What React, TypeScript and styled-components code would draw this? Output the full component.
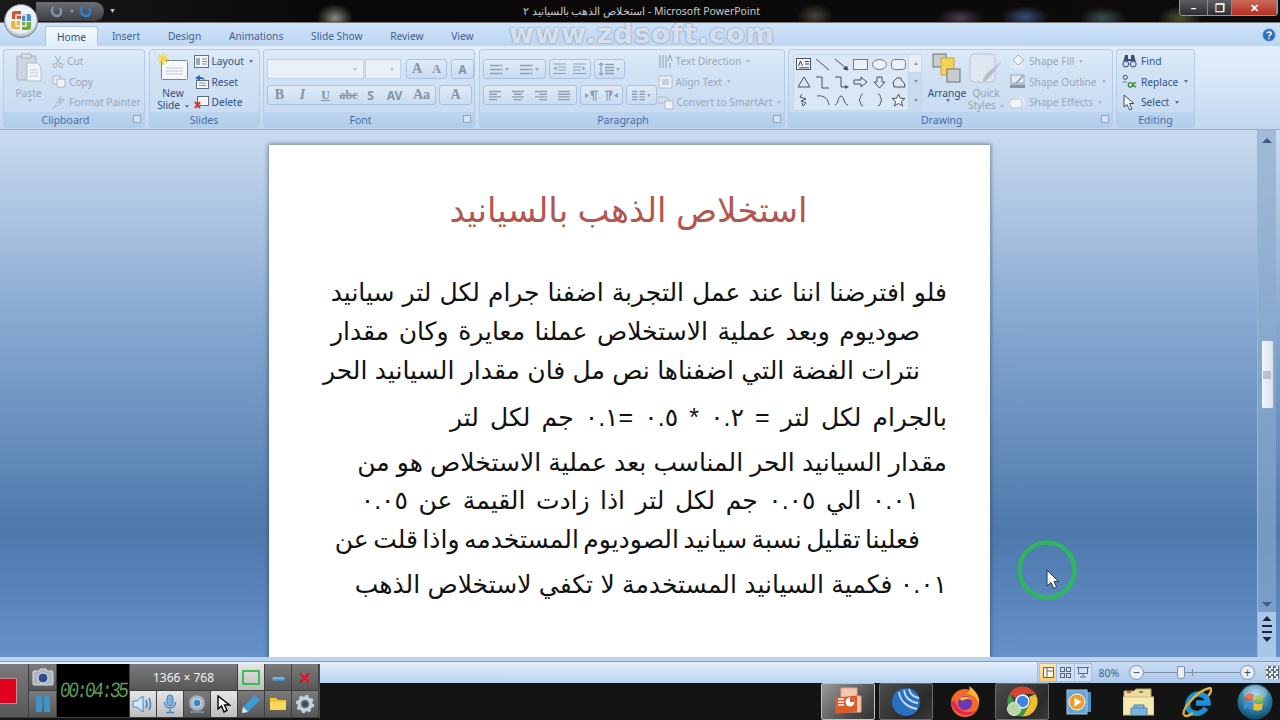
import React from "react"
import styled, { createGlobalStyle } from "styled-components"

const GlobalStyle = createGlobalStyle`
	html, body {
		margin: 0;
		padding: 0;
		background: #141414;
		font-family: "Noto Sans", "Liberation Sans", sans-serif;
	}
`

const Page = styled.div`
	position: relative;
	width: 1280px;
	height: 720px;
	overflow: hidden;
	display: flex;
	flex-direction: column;
`

/* title bar */
const TitleBar = styled.div`
	height: 23px;
	flex-shrink: 0;
	display: flex;
	align-items: flex-start;
	box-sizing: border-box;
	border-bottom: 1px solid #77797c;
	background:
		radial-gradient(ellipse 18px 14px at 335px 18px, #8f8b80 0%, rgba(100, 96, 88, 0.6) 55%, transparent 100%),
		radial-gradient(ellipse 18px 12px at 815px 16px, #4a4438 0%, transparent 100%),
		radial-gradient(ellipse 24px 10px at 960px 18px, #4b3a50 0%, transparent 100%),
		radial-gradient(ellipse 24px 11px at 1025px 17px, #3a4c78 0%, transparent 100%),
		radial-gradient(ellipse 24px 11px at 1103px 18px, #3a4d55 0%, transparent 100%),
		radial-gradient(ellipse 22px 12px at 1180px 18px, #4d5030 0%, transparent 100%),
		linear-gradient(90deg, #1a1a1a 0%, #0a0808 25%, #0d0b0a 100%);
`

const QuickAccess = styled.div`
	margin: 2px 0 0 36px;
	width: 68px;
	height: 19px;
	display: flex;
	align-items: center;
	gap: 5px;
	padding-left: 14px;
	box-sizing: border-box;
	color: #a8b4c4;
	border-radius: 0 10px 10px 0;
	background: linear-gradient(180deg, #6b6e72, #3c3e42);
`

const QuickMenu = styled.div`
	margin: 7px 0 0 5px;
	color: #c4c7cc;
	font-size: 7px;
	line-height: 8px;
`

const TitleText = styled.div`
	flex: 1;
	text-align: center;
	padding: 4px 12px 0 0;
	font-size: 10.5px;
	line-height: 15px;
	color: #c9c9c9;
	white-space: nowrap;
`

const WindowButtons = styled.div`
	display: flex;
	height: 15px;
	margin-right: 2px;
	border: 1px solid #9a9a9a;
	border-top: none;
	border-radius: 0 0 4px 4px;
	overflow: hidden;
`

const WindowButton = styled.div<{ $w: number; $close?: boolean }>`
	width: ${(p) => p.$w}px;
	display: flex;
	align-items: center;
	justify-content: center;
	color: #fff;
	font-size: 11px;
	font-weight: 700;
	border-right: 1px solid #888;
	background: ${(p) =>
		p.$close ? "linear-gradient(180deg, #c96a5a, #b52e20)" : "linear-gradient(180deg, #5c5f62, #2c2e31)"};
`

/* ribbon */
const TabRow = styled.div`
	height: 23px;
	flex-shrink: 0;
	display: flex;
	align-items: flex-end;
	padding-left: 45px;
	padding-right: 4px;
	background: linear-gradient(180deg, #cfe2f8, #bed6f2);
`

const Tab = styled.div<{ $active?: boolean }>`
	height: 20px;
	box-sizing: border-box;
	padding: ${(p) => (p.$active ? "0 11px 0 11px" : "0 13.9px")};
	display: flex;
	align-items: center;
	font-size: 10.2px;
	color: ${(p) => (p.$active ? "#2d4a78" : "#3f5f90")};
	border-radius: 3px 3px 0 0;
	white-space: nowrap;
	${(p) =>
		p.$active &&
		`background: linear-gradient(180deg, #f4f9fe, #dfeefb);
		border: 1px solid #aac6e6;
		border-bottom: none;`}
`

const HelpDot = styled.div`
	margin-left: auto;
	margin-bottom: 4px;
	display: flex;
`

const Ribbon = styled.div`
	height: 84px;
	flex-shrink: 0;
	display: flex;
	gap: 3.5px;
	padding: 3px 5px 1px 3px;
	box-sizing: border-box;
	border-bottom: 1px solid #8fb0d8;
	background: linear-gradient(180deg, #e3eefa 0%, #d6e5f6 45%, #c3d8f0 100%);
`

const Group = styled.div<{ $w: number }>`
	width: ${(p) => p.$w}px;
	flex-shrink: 0;
	box-sizing: border-box;
	display: flex;
	flex-direction: column;
	border: 1px solid #b4cce8;
	border-radius: 3px;
	overflow: hidden;
	background: linear-gradient(180deg, #dce9f7 0%, #d2e2f4 30%, #c6daf0 100%);
`

const GroupBody = styled.div`
	flex: 1;
	display: flex;
	padding: 1px 2px 0 3px;
	min-height: 0;
`

const GroupLabel = styled.div<{ $launch?: boolean }>`
	height: 15px;
	flex-shrink: 0;
	position: relative;
	display: flex;
	align-items: center;
	justify-content: center;
	box-sizing: border-box;
	padding-top: 1px;
	padding-right: ${(p) => (p.$launch ? "17px" : "0")};
	font-size: 10.5px;
	color: #4a6ea6;
	background: linear-gradient(180deg, #bcd4ee, #b2cdea);
`

const Launcher = styled.div`
	position: absolute;
	right: 3px;
	top: 3px;
	width: 6px;
	height: 6px;
	border: 1px solid #8fa8c8;
	background: #d5e3f3;
`

const BigButton = styled.div<{ $w: number; $dim?: boolean }>`
	width: ${(p) => p.$w}px;
	flex-shrink: 0;
	display: flex;
	flex-direction: column;
	align-items: center;
	font-size: 10.2px;
	line-height: 12px;
	text-align: center;
	color: ${(p) => (p.$dim ? "#96a6b9" : "#2f4f82")};
`

const BigIcon = styled.div`
	height: 36px;
	display: flex;
	align-items: flex-start;
	justify-content: center;
	padding-top: 2px;
	box-sizing: border-box;
`

const SmallCol = styled.div<{ $left?: number }>`
	display: flex;
	flex-direction: column;
	margin-left: ${(p) => p.$left ?? 0}px;
`

const SmallRow = styled.div<{ $dim?: boolean; $gap?: number }>`
	height: 20.5px;
	flex-shrink: 0;
	display: flex;
	align-items: center;
	gap: ${(p) => p.$gap ?? 3}px;
	font-size: 10.2px;
	white-space: nowrap;
	color: ${(p) => (p.$dim ? "#98a8bb" : "#2f4f82")};
`

const Caret = styled.span<{ $up?: boolean }>`
	display: inline-block;
	width: 0;
	height: 0;
	margin-left: 2px;
	vertical-align: middle;
	border: 2.5px solid transparent;
	border-top: 3px solid currentColor;
	border-bottom: none;
	opacity: 0.75;
	${(p) => (p.$up ? "transform: rotate(180deg);" : "")}
`

const ToolRows = styled.div`
	display: flex;
	flex-direction: column;
	gap: 6px;
	padding-top: 8px;
`

const ToolRow = styled.div<{ $gap?: number }>`
	display: flex;
	gap: ${(p) => p.$gap ?? 3}px;
	height: 20px;
`

const Combo = styled.div<{ $w: number }>`
	width: ${(p) => p.$w}px;
	box-sizing: border-box;
	display: flex;
	align-items: center;
	justify-content: flex-end;
	padding-right: 6px;
	color: #a8b4c2;
	border: 1px solid #bfd2e8;
	background: #e9f0f8;
`

const ToolGroup = styled.div<{ $left?: number }>`
	display: flex;
	margin-left: ${(p) => p.$left ?? 0}px;
	border: 1px solid #a9c2df;
	border-radius: 3px;
	background: linear-gradient(180deg, #e0ebf8, #c9dcf1);
`

const Tool = styled.div<{ $w: number; $serif?: boolean; $big?: boolean }>`
	width: ${(p) => p.$w}px;
	display: flex;
	align-items: center;
	justify-content: center;
	font-size: ${(p) => (p.$big ? 14 : 12)}px;
	font-weight: 700;
	color: #8393a6;
	font-family: ${(p) => (p.$serif ? '"Liberation Serif", serif' : "inherit")};
`

const Gallery = styled.div`
	width: 127px;
	height: 55px;
	margin: 3px 5px 0 1px;
	flex-shrink: 0;
	display: flex;
	border: 1px solid #c4d6ea;
	background: #dbe7f5;
`

const ShapeGrid = styled.div`
	flex: 1;
	display: grid;
	grid-template-columns: repeat(6, 19px);
	grid-template-rows: repeat(3, 18px);
	align-items: center;
	justify-items: center;
`

const GalleryScroll = styled.div`
	width: 12px;
	display: flex;
	flex-direction: column;
	border-left: 1px solid #c4d6ea;
`

const GalleryStep = styled.div<{ $top?: boolean }>`
	flex: 1;
	display: flex;
	align-items: center;
	justify-content: center;
	color: #667c98;
	background: ${(p) => (p.$top ? "#e8eef4" : "#c9daee")};
	border-bottom: 1px solid #c4d6ea;
`

/* document area */
const Workspace = styled.div`
	flex: 1;
	min-height: 0;
	display: flex;
	background: linear-gradient(180deg, #c9dbef 0%, #84a6cf 38%, #4e79ad 76%, #6590c9 100%);
`

const Canvas = styled.div`
	flex: 1;
	min-width: 0;
	padding: 15px 0 0 269px;
	overflow: hidden;
`

const Slide = styled.div`
	width: 721px;
	height: 100%;
	box-sizing: border-box;
	background: #fff;
	box-shadow: 0 0 4px 1px rgba(40, 60, 90, 0.55);
	padding-top: 43px;
	font-family: "Liberation Sans", "DejaVu Sans", sans-serif;
	color: #000;
`

const SlideTitle = styled.div`
	direction: rtl;
	text-align: center;
	font-size: 34px;
	line-height: 44px;
	color: #b45650;
	padding-right: 2px;
	white-space: nowrap;
`

const SlideBody = styled.div`
	margin-top: 45px;
`

const BodyLine = styled.div<{ $inset: number; $gap: number; $spread: number }>`
	direction: rtl;
	white-space: nowrap;
	font-size: 25px;
	line-height: 30px;
	color: #111;
	padding-right: ${(p) => p.$inset}px;
	margin-top: ${(p) => p.$gap}px;
	word-spacing: ${(p) => p.$spread}px;
`

const ScrollBar = styled.div`
	width: 18px;
	margin-right: 4px;
	display: flex;
	flex-direction: column;
	align-items: center;
	flex-shrink: 0;
	background: rgba(140, 170, 205, 0.65);
	border-left: 1px solid #9ab6d8;
`

const ScrollArrow = styled.div<{ $down?: boolean }>`
	width: 0;
	height: 0;
	margin-top: ${(p) => (p.$down ? "auto" : "8px")};
	margin-bottom: ${(p) => (p.$down ? "5px" : "0")};
	border-left: 5px solid transparent;
	border-right: 5px solid transparent;
	${(p) => (p.$down ? "border-top: 5px solid #3f5c86;" : "border-bottom: 5px solid #3f5c86;")}
`

const ScrollThumb = styled.div`
	width: 13px;
	height: 69px;
	margin-top: 197px;
	box-sizing: border-box;
	display: flex;
	align-items: center;
	justify-content: center;
	border: 1px solid #8ea7c6;
	border-radius: 2px;
	background: linear-gradient(90deg, #f3f6fa, #d9e2ee);
	color: #7e8794;
`

const PageStepper = styled.div`
	width: 100%;
	height: 45px;
	display: flex;
	flex-direction: column;
	align-items: center;
	gap: 4px;
	padding-top: 4px;
	box-sizing: border-box;
	background: #a9c5ea;
`

const EdgeStrip = styled.div`
	height: 4px;
	flex-shrink: 0;
	background: #bcd3ee;
	border-bottom: 1px solid #7f9fca;
`

const StatusBar = styled.div`
	height: 21px;
	flex-shrink: 0;
	display: flex;
	justify-content: flex-end;
	background: linear-gradient(180deg, #e4effb 0%, #cfe1f6 50%, #b9d3f1 100%);
`

const StatusRight = styled.div`
	width: 243px;
	display: flex;
	align-items: center;
	padding-left: 1px;
	box-sizing: border-box;
	background: linear-gradient(180deg, #c9dcf3, #abc8ea);
	border-left: 1px solid #a5bfde;
`

const ViewButton = styled.div<{ $active?: boolean }>`
	width: 16.5px;
	height: 17px;
	display: flex;
	align-items: center;
	justify-content: center;
	border: 1px solid #a5bfde;
	margin-right: -1px;
	background: ${(p) => (p.$active ? "linear-gradient(180deg, #fbe6ae, #f6cf75)" : "#cfe0f4")};
`

const ZoomText = styled.div`
	width: 35px;
	text-align: center;
	font-size: 10.5px;
	color: #3f5f90;
`

const ZoomTrack = styled.div`
	position: relative;
	width: 96px;
	height: 1px;
	background: #7d8fa8;
`

const ZoomTick = styled.div`
	position: absolute;
	left: 48px;
	top: -3px;
	width: 1px;
	height: 7px;
	background: #7d8fa8;
`

const ZoomThumb = styled.div`
	position: absolute;
	left: 33px;
	top: -6px;
	width: 6px;
	height: 11px;
	border: 1px solid #7d8fa8;
	border-radius: 1px 1px 3px 3px;
	background: #e8eef6;
`

const ZoomRound = styled.div<{ $left?: number }>`
	width: 13px;
	height: 13px;
	margin-left: ${(p) => p.$left ?? 0}px;
	display: flex;
	align-items: center;
	justify-content: center;
	flex-shrink: 0;
	border: 1px solid #7d8fa8;
	border-radius: 50%;
	background: #e7eef8;
	color: #3d4f68;
	font-size: 12px;
	line-height: 12px;
`

const FitButton = styled.div`
	width: 13px;
	height: 13px;
	margin-left: 10px;
	background: repeating-conic-gradient(#5b6a7c 0 25%, #eef3f9 0 50%) 0 0 / 5px 5px;
	border: 1px solid #b0c4dc;
`

const Taskbar = styled.div`
	height: 37px;
	flex-shrink: 0;
	display: flex;
	align-items: stretch;
	padding-left: 821px;
	background: #141414;
`

const TaskItem = styled.div<{ $w: number; $gap: number; $kind?: "on" | "open" }>`
	width: ${(p) => p.$w}px;
	margin-right: ${(p) => p.$gap}px;
	flex-shrink: 0;
	box-sizing: border-box;
	display: flex;
	align-items: center;
	justify-content: center;
	border-radius: 2px;
	${(p) =>
		p.$kind === "on"
			? "background: linear-gradient(135deg, #9a9a9a, #4a4a4a 70%, #333); border: 1px solid #c4c4c4;"
			: p.$kind === "open"
				? "background: linear-gradient(135deg, #4c4c4c, #2a2a2a 70%, #3a3a3a); border: 1px solid #6c6c6c;"
				: ""}
`

/* things lying over the window */
const OfficeOrb = styled.div`
	position: absolute;
	left: 4px;
	top: 4px;
	display: flex;
`

const Watermark = styled.div`
	position: absolute;
	left: 509px;
	top: 19px;
	font-family: "DejaVu Sans", sans-serif;
	font-size: 27px;
	line-height: 30px;
	font-weight: 700;
	letter-spacing: 1.1px;
	color: rgba(248, 251, 255, 0.8);
	text-shadow: 0 0 2px rgba(80, 110, 155, 0.95);
	white-space: nowrap;
`

const PointerMark = styled.div`
	position: absolute;
	left: 1017px;
	top: 540px;
	display: flex;
`

const Recorder = styled.div`
	position: absolute;
	left: 0;
	top: 664px;
	width: 320px;
	height: 54px;
	display: grid;
	grid-template-columns: 29px 28px 73px repeat(7, 27px);
	grid-template-rows: 27px 27px;
	gap: 0;
	background: #4f4f4f;
`

const RecCell = styled.div<{ $col?: number; $row?: number; $light?: boolean; $dark?: boolean }>`
	grid-column: span ${(p) => p.$col ?? 1};
	grid-row: span ${(p) => p.$row ?? 1};
	display: flex;
	align-items: center;
	justify-content: center;
	box-sizing: border-box;
	border-right: 1px solid #3f3f3f;
	border-bottom: 1px solid #3f3f3f;
	background: ${(p) =>
		p.$dark
			? "#000"
			: p.$light
				? "linear-gradient(180deg, #e6e6e6, #bdbdbd)"
				: "linear-gradient(180deg, #7b7b7b, #575757)"};
`

const RecSquare = styled.div`
	width: 18px;
	height: 24px;
	margin-right: 11px;
	background: #e2001f;
	border: 1px solid #c98b90;
	border-left: none;
`

const Timer = styled.div`
	font-family: "Liberation Mono", monospace;
	font-size: 18px;
	letter-spacing: -2.5px;
	color: #5a9a5a;
	transform: skewX(-6deg) scaleY(1.2);
	white-space: nowrap;
`

const SizeText = styled.div`
	font-size: 12px;
	color: #f2f2f2;
`

const GreenBox = styled.div`
	width: 14px;
	height: 11px;
	border: 2px solid #3dbb52;
`

const DashMark = styled.div`
	width: 13px;
	height: 4px;
	margin-top: 3px;
	border-radius: 2px;
	background: linear-gradient(180deg, #8fc0ea, #3f86c6);
`

const CloseMark = styled.div`
	color: #e0142c;
	font-size: 17px;
	line-height: 17px;
	font-weight: 700;
`

const OfficeLogo = () => (
	<svg width="34" height="34" viewBox="0 0 34 34">
		<defs>
			<radialGradient id="orb" cx="50%" cy="40%" r="60%">
				<stop offset="0" stopColor="#fff" />
				<stop offset="0.75" stopColor="#e9eef3" />
				<stop offset="1" stopColor="#9aa5b0" />
			</radialGradient>
		</defs>
		<circle cx="17" cy="17" r="16.5" fill="url(#orb)" stroke="#7b848e" />
		<path d="M8 9 Q8 7 11 7 H17 V15 H8 Z" fill="#d2552c" />
		<path d="M18 10 H25 Q27 10 27 13 V17 H18 Z" fill="#4a8fd0" />
		<path d="M7 17 H16 V25 H11 Q7 25 7 22 Z" fill="#eeb338" />
		<path d="M18 18 H27 V23 Q27 26 24 26 H18 Z" fill="#6fae3c" />
		<path d="M12 11 H22 V22 H12 Z" fill="none" stroke="#f4f4f4" strokeWidth="1.4" />
	</svg>
)

const PasteIcon = () => (
	<svg width="26" height="30" viewBox="0 0 26 30">
		<rect x="1" y="3" width="19" height="24" rx="1" fill="#cbd6e2" stroke="#a6b1be" />
		<rect x="6" y="1" width="9" height="4" fill="#dfe4ea" stroke="#a6b1be" />
		<path d="M11 10 H21 L25 14 V28 H11 Z" fill="#f1f4f8" stroke="#b3bcc7" />
		<path d="M14 17 H22 M14 20 H22 M14 23 H22" stroke="#c2c9d2" />
	</svg>
)

const CutIcon = () => (
	<svg width="12" height="13" viewBox="0 0 12 13" fill="none" stroke="#a2adba">
		<path d="M3 1 L8 9 M9 1 L4 9" />
		<circle cx="3" cy="10.5" r="2" />
		<circle cx="9" cy="10.5" r="2" />
	</svg>
)

const CopyIcon = () => (
	<svg width="14" height="13" viewBox="0 0 14 13">
		<rect x="1" y="1" width="7" height="8" fill="#e6ecf3" stroke="#b0bac6" />
		<rect x="5" y="4" width="8" height="8" fill="#eff3f8" stroke="#b0bac6" />
	</svg>
)

const BrushIcon = () => (
	<svg width="14" height="14" viewBox="0 0 14 14">
		<path d="M8 1 L13 5 L8 9 L5 6 Z" fill="#bac4d0" />
		<path d="M6 7 L1 13 L8 9 Z" fill="#e8edf3" stroke="#aeb8c4" />
	</svg>
)

const NewSlideIcon = () => (
	<svg width="32" height="28" viewBox="0 0 32 28">
		<rect x="4.5" y="7.5" width="26" height="19" rx="1" fill="#f4f7fb" stroke="#7b8796" />
		<path d="M9 15 H26 M9 18 H26 M9 21 H26" stroke="#c3cad4" />
		<g stroke="#f3d83a" strokeWidth="1.6">
			<path d="M6 0 V12 M0 6 H12 M2 2 L10 10 M10 2 L2 10" />
		</g>
	</svg>
)

const LayoutIcon = () => (
	<svg width="15" height="13" viewBox="0 0 15 13">
		<rect x="0.5" y="0.5" width="14" height="12" fill="#f4f6fa" stroke="#5f6e83" />
		<rect x="2" y="3" width="4" height="7" fill="#9aa9bc" />
		<path d="M8 4 H13 M8 6.5 H13 M8 9 H13" stroke="#7d8ba0" />
	</svg>
)

const ResetIcon = () => (
	<svg width="15" height="14" viewBox="0 0 15 14">
		<rect x="2.5" y="5.5" width="12" height="8" fill="#f4f6fa" stroke="#5f6e83" />
		<path d="M5 8 H12 M5 10.5 H12" stroke="#8494a8" />
		<path d="M1 3 L6 0 V2 C9 2 10 3 11 5 C9 4 8 4 6 4 V6 Z" fill="#2e66b4" />
	</svg>
)

const DeleteIcon = () => (
	<svg width="15" height="13" viewBox="0 0 15 13">
		<rect x="3.5" y="0.5" width="11" height="9" fill="#f4f6fa" stroke="#5f6e83" />
		<path d="M1 6 L6 12 M6 6 L1 12" stroke="#d8352a" strokeWidth="2" />
	</svg>
)

const lineColor = "#8fa0b5"

const BulletIcon = () => (
	<svg width="13" height="11" viewBox="0 0 13 11" stroke={lineColor} strokeWidth="1.4">
		<path d="M0 1.5 H10 M0 5.5 H10 M0 9.5 H10" />
		<path d="M11.5 0.5 V2.5 M11.5 4.5 V6.5 M11.5 8.5 V10.5" strokeWidth="1.6" />
	</svg>
)

const IndentIcon = ({ flip }: { flip?: boolean }) => (
	<svg width="13" height="12" viewBox="0 0 13 12" stroke={lineColor} strokeWidth="1.2" transform={flip ? "scale(-1 1)" : undefined}>
		<path d="M0 1 H13 M5 4 H13 M5 7 H13 M0 10.5 H13" />
		<path d="M3.5 3.5 L0.5 5.5 L3.5 7.5 Z" fill={lineColor} stroke="none" />
	</svg>
)

const SpacingIcon = () => (
	<svg width="16" height="14" viewBox="0 0 16 14" stroke={lineColor} strokeWidth="1.2" fill="none">
		<path d="M3 1 V13 M1 3 L3 1 L5 3 M1 11 L3 13 L5 11" />
		<path d="M7 2.5 H16 M7 5.5 H16 M7 8.5 H16 M7 11.5 H16" strokeWidth="1.4" />
	</svg>
)

const AlignIcon = ({ kind }: { kind: "left" | "center" | "right" | "full" }) => {
	const short = {
		left: "M0 4.2 H8 M0 9.6 H8",
		center: "M2 4.2 H10 M2 9.6 H10",
		right: "M4 4.2 H12 M4 9.6 H12",
		full: "M0 4.2 H12 M0 9.6 H12",
	}[kind]
	return (
		<svg width="12" height="11" viewBox="0 0 12 11" stroke={lineColor} strokeWidth="1.4">
			<path d={`M0 1.5 H12 M0 6.9 H12 ${short}`} />
		</svg>
	)
}

const ParaMarkIcon = ({ flip }: { flip?: boolean }) => (
	<svg width="13" height="11" viewBox="0 0 13 11" fill={lineColor} transform={flip ? "scale(-1 1)" : undefined}>
		<path d="M0 3 L4 5.5 L0 8 Z" />
		<path d="M6 0.5 H13 V2 H11.5 V10.5 H10.3 V2 H9 V10.5 H7.8 V6 C5 6 5 0.5 6 0.5 Z" />
	</svg>
)

const ColumnsIcon = () => (
	<svg width="13" height="11" viewBox="0 0 13 11" stroke={lineColor} strokeWidth="1.4">
		<path d="M0 1.5 H5.5 M0 4.2 H5.5 M0 6.9 H5.5 M0 9.6 H5.5 M7.5 1.5 H13 M7.5 4.2 H13 M7.5 6.9 H13 M7.5 9.6 H13" />
	</svg>
)

const GripIcon = () => (
	<svg width="8" height="8" viewBox="0 0 8 8" stroke="#8a93a0">
		<path d="M0 1 H8 M0 3 H8 M0 5 H8 M0 7 H8" />
	</svg>
)

const NormalViewIcon = () => (
	<svg width="11" height="11" viewBox="0 0 11 11" fill="#fdf6df" stroke="#55667c">
		<rect x="0.5" y="0.5" width="10" height="10" />
		<path d="M4 0.5 V10.5 M4 4 H10.5" fill="none" />
	</svg>
)

const SorterViewIcon = () => (
	<svg width="11" height="11" viewBox="0 0 11 11" fill="none" stroke="#55667c">
		<rect x="0.5" y="0.5" width="4" height="4" />
		<rect x="6.5" y="0.5" width="4" height="4" />
		<rect x="0.5" y="6.5" width="4" height="4" />
		<rect x="6.5" y="6.5" width="4" height="4" />
	</svg>
)

const ShowViewIcon = () => (
	<svg width="12" height="11" viewBox="0 0 12 11" fill="none" stroke="#55667c">
		<rect x="1.5" y="0.5" width="9" height="6" />
		<path d="M0 0.5 H12 M6 6.5 V9 M3 10 H9" />
	</svg>
)

const TextDirIcon = () => (
	<svg width="15" height="15" viewBox="0 0 15 15" fill="none" stroke="#8d9cae">
		<path d="M2 1 V14 M5 1 V14 M8 1 V14" />
		<path d="M10 7 L12 1 L14 7 M12 9 V14" />
	</svg>
)

const AlignTextIcon = () => (
	<svg width="15" height="15" viewBox="0 0 15 15">
		<rect x="1" y="2" width="13" height="12" fill="#e8eef5" stroke="#b4bfcc" />
		<path d="M4 6 H11 M4 8 H11 M4 10 H11" stroke="#a2aebc" />
	</svg>
)

const SmartArtIcon = () => (
	<svg width="16" height="15" viewBox="0 0 16 15">
		<path d="M0 2 H8 L11 5 L8 8 H0 Z" fill="#d5dde7" stroke="#b0bac6" />
		<rect x="7" y="6" width="8" height="8" fill="#eef2f7" stroke="#b0bac6" />
	</svg>
)

const ArrangeIcon = () => (
	<svg width="30" height="30" viewBox="0 0 30 30">
		<rect x="1" y="1" width="13" height="13" fill="#c9ccd0" stroke="#6d6f72" />
		<rect x="9" y="5" width="13" height="17" fill="#f1d35a" stroke="#c9a83a" />
		<rect x="15" y="16" width="13" height="13" fill="#c9ccd0" stroke="#6d6f72" />
	</svg>
)

const QuickStylesIcon = () => (
	<svg width="34" height="31" viewBox="0 0 34 31">
		<rect x="1" y="1" width="25" height="28" rx="4" fill="#dfe7f1" stroke="#b8c4d2" />
		<path d="M33 8 L21 24 L17 28 Q14 30 14 26 L18 20 Z" fill="#b7c1cd" />
	</svg>
)

const ShapeFillIcon = () => (
	<svg width="16" height="15" viewBox="0 0 16 15">
		<path d="M8 1 L14 6 L8 11 L3 6 Z" fill="#eef2f7" stroke="#a7b2c0" />
		<rect x="0" y="11" width="15" height="3" fill="#e6ecf3" />
	</svg>
)

const ShapeOutlineIcon = () => (
	<svg width="16" height="15" viewBox="0 0 16 15">
		<rect x="1" y="1" width="13" height="8" fill="#e6ecf3" stroke="#98a4b4" />
		<path d="M6 9 L13 2" stroke="#8c98a8" strokeWidth="1.5" />
		<rect x="0" y="10.5" width="15" height="3.5" fill="#8896a8" />
	</svg>
)

const ShapeEffectsIcon = () => (
	<svg width="16" height="14" viewBox="0 0 16 14">
		<rect x="2" y="2" width="13" height="10" rx="3" fill="#dfe6ee" />
		<rect x="0" y="4" width="12" height="9" rx="3" fill="#f0f3f7" stroke="#c1cad5" />
	</svg>
)

const FindIcon = () => (
	<svg width="15" height="14" viewBox="0 0 15 14" fill="#3a4f78">
		<path d="M3 1 H6 V5 H9 V1 H12 L14 9 H9 V7 H6 V9 H1 Z" />
		<circle cx="3.8" cy="10" r="3" fill="#c7d6e8" stroke="#3a4f78" />
		<circle cx="11.2" cy="10" r="3" fill="#c7d6e8" stroke="#3a4f78" />
	</svg>
)

const ReplaceIcon = () => (
	<svg width="15" height="15" viewBox="0 0 16 15">
		<circle cx="3.5" cy="3" r="2.2" fill="none" stroke="#2d4268" />
		<path d="M1 9 C2 7 4 7 5 9" fill="none" stroke="#3f6ea8" />
		<circle cx="9" cy="11" r="2.4" fill="none" stroke="#3b8a3b" strokeWidth="1.4" />
		<path d="M15 9.2 C13 8 12.4 9.6 12.4 11 C12.4 13 14 13.6 15 12.6" fill="none" stroke="#3b8a3b" strokeWidth="1.4" />
	</svg>
)

const SelectIcon = () => (
	<svg width="15" height="17" viewBox="0 0 13 17">
		<path d="M1 1 V13 L4 10.5 L6.5 16 L9 15 L6.5 9.5 H11 Z" fill="#f6f8fb" stroke="#3f4d62" />
	</svg>
)

const HelpIcon = () => (
	<svg width="14" height="14" viewBox="0 0 14 14">
		<circle cx="7" cy="7" r="6.5" fill="#2f6fc0" stroke="#a9c8ec" />
		<path d="M4.8 5.4 C5 3.4 9.2 3.4 9.2 5.4 C9.2 6.8 7 6.8 7 8.4" fill="none" stroke="#fff" strokeWidth="1.5" />
		<circle cx="7" cy="10.4" r="0.9" fill="#fff" />
	</svg>
)

const UndoIcon = ({ color }: { color: string }) => (
	<svg width="13" height="13" viewBox="0 0 13 13" fill="none" stroke={color} strokeWidth="2.4">
		<path d="M3 2 C0 7 4 11 7 11 C11 11 12 7 10 3" />
	</svg>
)

const shapeStroke = { fill: "none", stroke: "#44505f" }

const shapes: React.ReactNode[] = [
	<svg key="tb" width="15" height="12" viewBox="0 0 15 12">
		<rect x="0.5" y="0.5" width="14" height="11" fill="#f4f6fa" stroke="#4a5668" />
		<path d="M2.5 8 L4.5 3 L6.5 8 M9 3.5 H13 M9 6 H13 M3 9.8 H13" stroke="#333f50" fill="none" />
	</svg>,
	<svg key="l" width="15" height="13" viewBox="0 0 15 13" {...shapeStroke}><path d="M1 1 L14 12" /></svg>,
	<svg key="a" width="15" height="13" viewBox="0 0 15 13" {...shapeStroke}><path d="M1 1 L13 11" /><path d="M14 12 L9.5 11 L12.5 8 Z" fill="#44505f" /></svg>,
	<svg key="r" width="15" height="11" viewBox="0 0 15 11"><rect x="0.5" y="0.5" width="14" height="10" fill="#eaf1f9" stroke="#6d7a8c" /></svg>,
	<svg key="o" width="15" height="11" viewBox="0 0 15 11"><ellipse cx="7.5" cy="5.5" rx="7" ry="5" fill="#eaf1f9" stroke="#6d7a8c" /></svg>,
	<svg key="rr" width="15" height="11" viewBox="0 0 15 11"><rect x="0.5" y="0.5" width="14" height="10" rx="3" fill="#eaf1f9" stroke="#6d7a8c" /></svg>,
	<svg key="t" width="14" height="12" viewBox="0 0 14 12" {...shapeStroke}><path d="M7 1 L13 11 H1 Z" /></svg>,
	<svg key="e" width="15" height="13" viewBox="0 0 15 13" {...shapeStroke}><path d="M1 1 H7 V12 H14" /></svg>,
	<svg key="ea" width="15" height="13" viewBox="0 0 15 13" {...shapeStroke}><path d="M1 1 H7 V11 H12" /><path d="M15 11 L11 9 V13 Z" fill="#44505f" stroke="none" /></svg>,
	<svg key="ra" width="15" height="12" viewBox="0 0 15 12" {...shapeStroke}><path d="M1 4 H8 V1 L14 6 L8 11 V8 H1 Z" /></svg>,
	<svg key="da" width="13" height="13" viewBox="0 0 13 13" {...shapeStroke}><path d="M4 1 H9 V6 H12 L6.5 12 L1 6 H4 Z" /></svg>,
	<svg key="p" width="14" height="11" viewBox="0 0 14 11" {...shapeStroke}><path d="M1 5 L5 1 H9 L10 4 Q13 5 13 10 H2 Z" /></svg>,
	<svg key="sq" width="10" height="14" viewBox="0 0 10 14" {...shapeStroke}><path d="M3 1 L1 4 L7 6 L2 8 L7 10 L4 13 L3 10" /></svg>,
	<svg key="c" width="14" height="12" viewBox="0 0 14 12" {...shapeStroke}><path d="M1 2 C7 1 12 4 13 11" /></svg>,
	<svg key="cv" width="15" height="11" viewBox="0 0 15 11" {...shapeStroke}><path d="M1 10 C4 10 4 1 7 1 C10 1 10 10 14 10" /></svg>,
	<svg key="lb" width="8" height="14" viewBox="0 0 8 14" {...shapeStroke}><path d="M6 1 C3 1 4 6 2 7 C4 8 3 13 6 13" /></svg>,
	<svg key="rb" width="8" height="14" viewBox="0 0 8 14" {...shapeStroke}><path d="M2 1 C5 1 4 6 6 7 C4 8 5 13 2 13" /></svg>,
	<svg key="st" width="15" height="14" viewBox="0 0 15 14"><path d="M7.5 1 L9.3 5.2 L14 5.5 L10.4 8.5 L11.6 13 L7.5 10.5 L3.4 13 L4.6 8.5 L1 5.5 L5.7 5.2 Z" fill="#f3f6fa" stroke="#44505f" /></svg>,
]

const PowerPointIcon = () => (
	<svg width="30" height="30" viewBox="0 0 30 30">
		<path d="M8 1 H24 V9 H28 V25 H8 Z" fill="#f3c7b2" stroke="#e9a184" />
		<path d="M2 8 H24 V24 H2 Z" fill="#dd5a2a" transform="skewY(-6) translate(0 3)" />
		<path d="M5 12 H11 M5 15 H11 M5 18 H11" stroke="#fff" strokeWidth="1.6" />
		<circle cx="17" cy="15" r="4.5" fill="#fff" />
		<path d="M17 15 V10.5 A4.5 4.5 0 0 1 21.5 15 Z" fill="#dd5a2a" />
	</svg>
)

const WinboxIcon = () => (
	<svg width="30" height="30" viewBox="0 0 30 30">
		<circle cx="15" cy="15" r="14" fill="#2a6fc0" />
		<path d="M8 5 C9 13 15 20 26 22 M13 3 C14 10 19 15 27 16 M18 2 C19 7 22 10 28 11" fill="none" stroke="#c9def3" strokeWidth="1.8" />
	</svg>
)

const FirefoxIcon = () => (
	<svg width="30" height="31" viewBox="0 0 30 31">
		<circle cx="15" cy="17" r="14" fill="#f2692b" />
		<path d="M19 0 C28 6 30 13 29 18 C26 9 20 8 16 8 C20 6 20 3 19 0 Z" fill="#ffb52e" />
		<path d="M1 16 C3 28 18 34 27 24 C20 28 8 27 5 15 Z" fill="#e22850" />
		<circle cx="15" cy="17" r="7" fill="#6c36b8" />
		<path d="M9 13 C12 10 18 10 22 14 C18 12 14 13 13 15 Z" fill="#ffb52e" />
	</svg>
)

const ChromeIcon = () => (
	<svg width="33" height="33" viewBox="0 0 33 33">
		<path d="M16.5 1.5 A15 15 0 0 1 29.5 9 H16.5 A7.5 7.5 0 0 0 9.5 13.5 L3.5 9 A15 15 0 0 1 16.5 1.5 Z" fill="#d9432f" />
		<path d="M29.5 9 A15 15 0 0 1 16.5 31.5 L22.5 21 A7.5 7.5 0 0 0 23 12 Z" fill="#f2bf2c" />
		<path d="M3.5 9 A15 15 0 0 0 16.5 31.5 L22 21 A7.5 7.5 0 0 1 9.5 18 Z" fill="#3a9c4a" />
		<circle cx="16.5" cy="16.5" r="6.5" fill="#3f82ea" stroke="#fff" strokeWidth="1.6" />
		<circle cx="8" cy="24" r="6.5" fill="#b9d6a8" stroke="#e7f0df" />
	</svg>
)

const MediaIcon = () => (
	<svg width="26" height="26" viewBox="0 0 26 26">
		<rect x="17" y="3" width="8" height="20" fill="#4a8fc8" />
		<rect x="1" y="1" width="20" height="24" fill="#69a6d6" stroke="#a4cbe6" />
		<circle cx="11" cy="13" r="8" fill="#f09a2a" stroke="#fff" />
		<path d="M8.5 8.5 L15.5 13 L8.5 17.5 Z" fill="#fff" />
	</svg>
)

const ExplorerIcon = () => (
	<svg width="31" height="28" viewBox="0 0 31 28">
		<path d="M1 3 H11 L13 1 H28 V16 H1 Z" fill="#ecdca0" stroke="#b9a665" />
		<rect x="4" y="3" width="4" height="2" fill="#d85a4a" />
		<rect x="16" y="3" width="4" height="2" fill="#5ca84a" />
		<path d="M0 9 H31 V27 H0 Z" fill="#f6e8ae" stroke="#cdbb78" />
		<path d="M8 27 V20 H24 V27 M11 20 V17 H21 V20" fill="#7db3de" stroke="#4f87b8" />
	</svg>
)

const IeIcon = () => (
	<svg width="30" height="30" viewBox="0 0 30 30" fill="none">
		<path d="M14 16 H26 C26 6 10 2 6 16 C3 27 18 30 24 21" stroke="#1f8fd6" strokeWidth="5.5" />
		<path d="M2 28 C-1 22 16 3 28 1 C31 2 28 7 26 9" stroke="#e3b230" strokeWidth="2.4" />
		<path d="M2 28 C4 30 7 29 11 26" stroke="#e3b230" strokeWidth="2.4" />
	</svg>
)

const StartOrb = () => (
	<svg width="36" height="36" viewBox="0 0 36 36">
		<defs>
			<radialGradient id="start" cx="50%" cy="30%" r="75%">
				<stop offset="0" stopColor="#9fd0ea" />
				<stop offset="0.6" stopColor="#2b7a9e" />
				<stop offset="1" stopColor="#0e3e5e" />
			</radialGradient>
		</defs>
		<circle cx="18" cy="18" r="17.5" fill="url(#start)" />
		<path d="M9 11 C12 9 14 9 17 10.5 L15.8 17 C13 15.5 11 15.5 8 17 Z" fill="#e2502a" />
		<path d="M18.5 11 C21 12.5 24 12.5 27 11 L26 17.5 C23 19 20 19 17.4 17.5 Z" fill="#8dbb3a" />
		<path d="M7.6 18.5 C11 17 13 17 15.5 18.5 L14.4 25 C12 23.5 10 23.5 6.6 25 Z" fill="#3a8fd8" />
		<path d="M17 19 C20 20.5 23 20.5 25.8 19 L24.8 25.5 C22 27 19 27 16 25.5 Z" fill="#f2bd2e" />
		<ellipse cx="18" cy="9" rx="12" ry="7" fill="#fff" opacity="0.22" />
	</svg>
)

const PointerRing = () => (
	<svg width="60" height="60" viewBox="0 0 60 60">
		<circle cx="30" cy="30" r="27.5" fill="none" stroke="#2fb55f" strokeWidth="4.5" />
		<path d="M30 30 V46 L34 42.5 L37 48.5 L39.5 47 L37 41.5 H41.5 Z" fill="#fff" stroke="#1d3557" />
	</svg>
)

const CameraIcon = () => (
	<svg width="22" height="18" viewBox="0 0 22 18">
		<path d="M2 3 H7 L8 1 H14 L15 3 H20 Q21 3 21 4 V16 Q21 17 20 17 H2 Q1 17 1 16 V4 Q1 3 2 3 Z" fill="#aeb6c4" stroke="#d9dde3" />
		<circle cx="11" cy="10" r="5" fill="#2e4a8c" stroke="#e4e7ec" />
	</svg>
)

const SpeakerIcon = () => (
	<svg width="22" height="18" viewBox="0 0 22 18" fill="none">
		<path d="M1 6 H5 L11 1 V17 L5 12 H1 Z" fill="#dbe9f5" stroke="#3f86c6" />
		<path d="M14 5 Q16 9 14 13 M17 3 Q20 9 17 15" stroke="#3f86c6" strokeWidth="1.6" />
	</svg>
)

const MicIcon = () => (
	<svg width="14" height="20" viewBox="0 0 14 20" fill="none">
		<rect x="4" y="1" width="6" height="11" rx="3" fill="#7db0dc" stroke="#3f86c6" />
		<path d="M1.5 8 C1.5 16 12.5 16 12.5 8 M7 15 V18 M3 18.5 H11" stroke="#3f86c6" strokeWidth="1.4" />
	</svg>
)

const WebcamIcon = () => (
	<svg width="20" height="20" viewBox="0 0 20 20">
		<circle cx="10" cy="9" r="8" fill="#a8b4c0" stroke="#7b8794" />
		<circle cx="10" cy="9" r="4" fill="#3f86c6" stroke="#dfe6ec" />
		<path d="M3 18 H17" stroke="#7b8794" strokeWidth="2" />
	</svg>
)

const ArrowIcon = () => (
	<svg width="14" height="18" viewBox="0 0 14 18">
		<path d="M1 1 V14 L4.5 11 L7 17 L10 15.5 L7.5 10 H12.5 Z" fill="#fff" stroke="#000" strokeWidth="1.4" />
	</svg>
)

const PencilIcon = () => (
	<svg width="20" height="20" viewBox="0 0 20 20">
		<path d="M14 1 L19 6 L7 18 L1 19 L2 13 Z" fill="#3f9ad8" />
		<path d="M2 13 L7 18 L1 19 Z" fill="#f2e6d4" />
	</svg>
)

const FolderIcon = () => (
	<svg width="18" height="14" viewBox="0 0 18 14">
		<path d="M1 1 H7 L9 3 H17 V13 H1 Z" fill="#f4c430" />
		<path d="M1 5 H17 V13 H1 Z" fill="#fbd75a" />
	</svg>
)

const GearIcon = () => (
	<svg width="18" height="18" viewBox="0 0 18 18">
		<circle cx="9" cy="9" r="6" fill="none" stroke="#c4d4e0" strokeWidth="3.4" />
		<circle cx="9" cy="9" r="8" fill="none" stroke="#c4d4e0" strokeWidth="2.4" strokeDasharray="3 3.3" />
		<circle cx="9" cy="9" r="2.4" fill="#2f4a63" />
	</svg>
)

const PauseIcon = () => (
	<svg width="16" height="16" viewBox="0 0 16 16" fill="#3f92d2">
		<rect x="1" y="0" width="6" height="16" />
		<rect x="9" y="0" width="6" height="16" />
	</svg>
)

const tabs = ["Home", "Insert", "Design", "Animations", "Slide Show", "Review", "View"]

const bodyLines = [
	{ text: "فلو افترضنا اننا عند عمل التجربة اضفنا جرام لكل لتر سيانيد", inset: 43, gap: 0, spread: 1.1 },
	{ text: "صوديوم وبعد عملية الاستخلاص عملنا معايرة وكان مقدار", inset: 70, gap: 9, spread: 2.6 },
	{ text: "نترات الفضة التي اضفناها نص مل فان مقدار السيانيد الحر", inset: 70, gap: 9, spread: 0.4 },
	{ text: "بالجرام لكل لتر = ٠.٢ * ٠.٥ =٠.١ جم لكل لتر", inset: 43, gap: 17, spread: 4.2 },
	{ text: "مقدار السيانيد الحر المناسب بعد عملية الاستخلاص هو من", inset: 43, gap: 15, spread: 0.25 },
	{ text: "٠.٠١ الي ٠.٠٥ جم لكل لتر اذا زادت القيمة عن ٠.٠٥", inset: 71, gap: 8, spread: 3.5 },
	{ text: "فعلينا تقليل نسبة سيانيد الصوديوم المستخدمه واذا قلت عن", inset: 70, gap: 9, spread: -2.5 },
	{ text: "٠.٠١ فكمية السيانيد المستخدمة لا تكفي لاستخلاص الذهب", inset: 43, gap: 15, spread: 0.4 },
]

const App: React.FC = () => {
	return (
		<Page>
			<GlobalStyle />
			<TitleBar>
				<QuickAccess>
					<UndoIcon color="#7f93ad" />
					<Caret />
					<UndoIcon color="#2f7fd0" />
				</QuickAccess>
				<QuickMenu>▼</QuickMenu>
				<TitleText>استخلاص الذهب بالسيانيد ٢ - Microsoft PowerPoint</TitleText>
				<WindowButtons>
					<WindowButton $w={27}>–</WindowButton>
					<WindowButton $w={23}>❐</WindowButton>
					<WindowButton $w={44} $close>✕</WindowButton>
				</WindowButtons>
			</TitleBar>

			<TabRow>
				{tabs.map((name, i) => (
					<Tab key={name} $active={i === 0}>{name}</Tab>
				))}
				<HelpDot><HelpIcon /></HelpDot>
			</TabRow>

			<Ribbon>
				<Group $w={142}>
					<GroupBody>
						<BigButton $w={43} $dim>
							<BigIcon><PasteIcon /></BigIcon>
							<div>Paste</div>
							<Caret />
						</BigButton>
						<SmallCol $left={2}>
							<SmallRow $dim><CutIcon /> Cut</SmallRow>
							<SmallRow $dim><CopyIcon /> Copy</SmallRow>
							<SmallRow $dim><BrushIcon /> Format Painter</SmallRow>
						</SmallCol>
					</GroupBody>
					<GroupLabel $launch>Clipboard<Launcher /></GroupLabel>
				</Group>

				<Group $w={111}>
					<GroupBody>
						<BigButton $w={41}>
							<BigIcon><NewSlideIcon /></BigIcon>
							<div>New</div>
							<div>Slide <Caret /></div>
						</BigButton>
						<SmallCol>
							<SmallRow><LayoutIcon /> Layout <Caret /></SmallRow>
							<SmallRow><ResetIcon /> Reset</SmallRow>
							<SmallRow><DeleteIcon /> Delete</SmallRow>
						</SmallCol>
					</GroupBody>
					<GroupLabel>Slides</GroupLabel>
				</Group>

				<Group $w={212}>
					<GroupBody>
						<ToolRows>
							<ToolRow $gap={1}>
								<Combo $w={97}><Caret /></Combo>
								<Combo $w={36}><Caret /></Combo>
								<ToolGroup $left={4}>
									<Tool $w={20} $serif $big>A</Tool>
									<Tool $w={19} $serif>A</Tool>
								</ToolGroup>
								<ToolGroup $left={3}>
									<Tool $w={21}>A</Tool>
								</ToolGroup>
							</ToolRow>
							<ToolRow>
								<ToolGroup>
									<Tool $w={23} $serif $big>B</Tool>
									<Tool $w={23} $serif $big><i>I</i></Tool>
									<Tool $w={23} $serif><u>U</u></Tool>
									<Tool $w={23} $serif><s>abc</s></Tool>
									<Tool $w={21}>S</Tool>
									<Tool $w={27}>AV</Tool>
									<Tool $w={27} $serif $big>Aa</Tool>
								</ToolGroup>
								<ToolGroup>
									<Tool $w={31} $serif $big>A</Tool>
								</ToolGroup>
							</ToolRow>
						</ToolRows>
					</GroupBody>
					<GroupLabel $launch>Font<Launcher /></GroupLabel>
				</Group>

				<Group $w={306}>
					<GroupBody>
						<ToolRows>
							<ToolRow>
								<ToolGroup>
									<Tool $w={31}><BulletIcon /><Caret /></Tool>
									<Tool $w={30}><BulletIcon /><Caret /></Tool>
								</ToolGroup>
								<ToolGroup>
									<Tool $w={20}><IndentIcon /></Tool>
									<Tool $w={20}><IndentIcon flip /></Tool>
								</ToolGroup>
								<ToolGroup>
									<Tool $w={29}><SpacingIcon /><Caret /></Tool>
								</ToolGroup>
							</ToolRow>
							<ToolRow>
								<ToolGroup>
									<Tool $w={23}><AlignIcon kind="left" /></Tool>
									<Tool $w={23}><AlignIcon kind="center" /></Tool>
									<Tool $w={23}><AlignIcon kind="right" /></Tool>
									<Tool $w={23}><AlignIcon kind="full" /></Tool>
								</ToolGroup>
								<ToolGroup>
									<Tool $w={21}><ParaMarkIcon /></Tool>
									<Tool $w={20}><ParaMarkIcon flip /></Tool>
								</ToolGroup>
								<ToolGroup>
									<Tool $w={29}><ColumnsIcon /><Caret /></Tool>
								</ToolGroup>
							</ToolRow>
						</ToolRows>
						<SmallCol $left={1}>
							<SmallRow $dim><TextDirIcon /> Text Direction <Caret /></SmallRow>
							<SmallRow $dim><AlignTextIcon /> Align Text <Caret /></SmallRow>
							<SmallRow $dim><SmartArtIcon /> Convert to SmartArt <Caret /></SmallRow>
						</SmallCol>
					</GroupBody>
					<GroupLabel $launch>Paragraph<Launcher /></GroupLabel>
				</Group>

				<Group $w={324.5}>
					<GroupBody>
						<Gallery>
							<ShapeGrid>{shapes}</ShapeGrid>
							<GalleryScroll>
								<GalleryStep $top><Caret $up /></GalleryStep>
								<GalleryStep><Caret /></GalleryStep>
								<GalleryStep><Caret /></GalleryStep>
							</GalleryScroll>
						</Gallery>
						<BigButton $w={40}>
							<BigIcon><ArrangeIcon /></BigIcon>
							<div>Arrange</div>
							<Caret />
						</BigButton>
						<BigButton $w={38} $dim>
							<BigIcon><QuickStylesIcon /></BigIcon>
							<div>Quick</div>
							<div>Styles <Caret /></div>
						</BigButton>
						<SmallCol $left={5}>
							<SmallRow $dim><ShapeFillIcon /> Shape Fill <Caret /></SmallRow>
							<SmallRow $dim><ShapeOutlineIcon /> Shape Outline <Caret /></SmallRow>
							<SmallRow $dim><ShapeEffectsIcon /> Shape Effects <Caret /></SmallRow>
						</SmallCol>
					</GroupBody>
					<GroupLabel $launch>Drawing<Launcher /></GroupLabel>
				</Group>

				<Group $w={79}>
					<GroupBody>
						<SmallCol $left={2}>
							<SmallRow $gap={4}><FindIcon /> Find</SmallRow>
							<SmallRow $gap={4}><ReplaceIcon /> Replace <Caret /></SmallRow>
							<SmallRow $gap={4}><SelectIcon /> Select <Caret /></SmallRow>
						</SmallCol>
					</GroupBody>
					<GroupLabel>Editing</GroupLabel>
				</Group>
			</Ribbon>

			<Workspace>
				<Canvas>
					<Slide>
						<SlideTitle>استخلاص الذهب بالسيانيد</SlideTitle>
						<SlideBody>
							{bodyLines.map((line) => (
								<BodyLine key={line.text} $inset={line.inset} $gap={line.gap} $spread={line.spread}>{line.text}</BodyLine>
							))}
						</SlideBody>
					</Slide>
				</Canvas>
				<ScrollBar>
					<ScrollArrow />
					<ScrollThumb><GripIcon /></ScrollThumb>
					<ScrollArrow $down />
					<PageStepper>
						<svg width="10" height="11" viewBox="0 0 10 11" fill="#1a2435"><path d="M5 0 L9.5 5 H0.5 Z M0 9 H10 V11 H0 Z" /></svg>
						<svg width="10" height="11" viewBox="0 0 10 11" fill="#1a2435"><path d="M0 0 H10 V2 H0 Z M0.5 6 H9.5 L5 11 Z" /></svg>
					</PageStepper>
				</ScrollBar>
			</Workspace>

			<EdgeStrip />
			<StatusBar>
				<StatusRight>
					<ViewButton $active><NormalViewIcon /></ViewButton>
					<ViewButton><SorterViewIcon /></ViewButton>
					<ViewButton><ShowViewIcon /></ViewButton>
					<ZoomText>80%</ZoomText>
					<ZoomRound $left={3}>−</ZoomRound>
					<ZoomTrack><ZoomTick /><ZoomThumb /></ZoomTrack>
					<ZoomRound>+</ZoomRound>
					<FitButton />
				</StatusRight>
			</StatusBar>

			<Taskbar>
				<TaskItem $w={54} $gap={4} $kind="on"><PowerPointIcon /></TaskItem>
				<TaskItem $w={54} $gap={17} $kind="open"><WinboxIcon /></TaskItem>
				<TaskItem $w={30} $gap={15}><FirefoxIcon /></TaskItem>
				<TaskItem $w={54} $gap={17} $kind="open"><ChromeIcon /></TaskItem>
				<TaskItem $w={26} $gap={31}><MediaIcon /></TaskItem>
				<TaskItem $w={31} $gap={28}><ExplorerIcon /></TaskItem>
				<TaskItem $w={30} $gap={25}><IeIcon /></TaskItem>
				<TaskItem $w={36} $gap={0}><StartOrb /></TaskItem>
			</Taskbar>

			<OfficeOrb><OfficeLogo /></OfficeOrb>
			<Watermark>www.zdsoft.com</Watermark>
			<PointerMark><PointerRing /></PointerMark>

			<Recorder>
				<RecCell $row={2}><RecSquare /></RecCell>
				<RecCell><CameraIcon /></RecCell>
				<RecCell $row={2} $dark><Timer>00:04:35</Timer></RecCell>
				<RecCell $col={4}><SizeText>1366 × 768</SizeText></RecCell>
				<RecCell $light><GreenBox /></RecCell>
				<RecCell><DashMark /></RecCell>
				<RecCell><CloseMark>✕</CloseMark></RecCell>
				<RecCell><PauseIcon /></RecCell>
				<RecCell $light><SpeakerIcon /></RecCell>
				<RecCell $light><MicIcon /></RecCell>
				<RecCell><WebcamIcon /></RecCell>
				<RecCell $light><ArrowIcon /></RecCell>
				<RecCell><PencilIcon /></RecCell>
				<RecCell><FolderIcon /></RecCell>
				<RecCell><GearIcon /></RecCell>
			</Recorder>
		</Page>
	)
}

export default App
